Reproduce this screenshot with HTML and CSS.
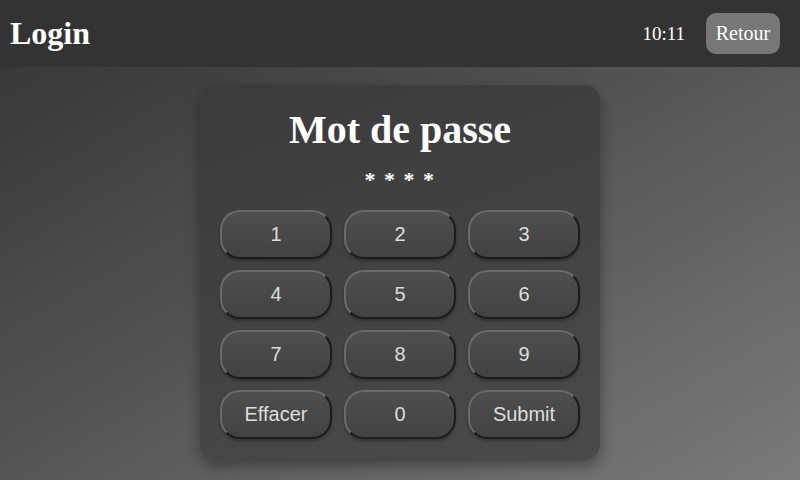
FILE: index.html
```html
<!DOCTYPE html>
<html lang="fr">
<head>
<meta charset="utf-8">
<title>Login</title>
<link rel="stylesheet" href="styles.css">
</head>
<body>
<header class="topbar">
  <h1 class="title">Login</h1>
  <div class="right">
    <span class="clock">10:11</span>
    <button class="back">Retour</button>
  </div>
</header>
<main class="stage">
  <section class="card">
    <h2 class="card-title">Mot de passe</h2>
    <div class="mask">* * * *</div>
    <div class="pad">
      <button class="key">1</button>
      <button class="key">2</button>
      <button class="key">3</button>
      <button class="key">4</button>
      <button class="key">5</button>
      <button class="key">6</button>
      <button class="key">7</button>
      <button class="key">8</button>
      <button class="key">9</button>
      <button class="key">Effacer</button>
      <button class="key">0</button>
      <button class="key">Submit</button>
    </div>
  </section>
</main>
</body>
</html>
```
FILE: styles.css
```css
* { box-sizing: border-box; }
html, body { margin: 0; height: 100%; }
body {
  font-family: "Liberation Serif", serif;
  color: #fff;
  background: linear-gradient(150deg, #333 0%, #555 50%, #7a7a7a 100%);
  display: flex;
  flex-direction: column;
  overflow: hidden;
}
.topbar {
  height: 67px;
  background: #333;
  display: flex;
  align-items: center;
  justify-content: space-between;
  padding: 0 20px 0 10px;
  flex: none;
}
.title {
  margin: 0;
  font-size: 32px;
  font-weight: bold;
}
.right {
  display: flex;
  align-items: center;
  gap: 21px;
}
.clock { font-size: 19px; }
.back {
  font-family: "Liberation Serif", serif;
  font-size: 20px;
  color: #fff;
  background: #777;
  border: none;
  border-radius: 10px;
  width: 74px;
  height: 41px;
  padding: 0;
  margin-top: -1px;
}
.stage {
  flex: 1;
  display: flex;
  justify-content: center;
  align-items: flex-start;
  padding-top: 18px;
}
.card {
  width: 400px;
  height: 375px;
  border-radius: 15px;
  background: linear-gradient(160deg, #3b3b3b, #4a4a4a);
  box-shadow: 0 6px 14px rgba(0,0,0,0.35);
  padding: 22px 20px 20px;
  display: flex;
  flex-direction: column;
  align-items: center;
}
.card-title {
  margin: 0;
  font-size: 40px;
  font-weight: bold;
  line-height: 46px;
}
.mask {
  font-size: 22px;
  font-weight: bold;
  line-height: 24px;
  margin-top: 15px;
  letter-spacing: 1.5px;
}
.pad {
  margin-top: 18px;
  width: 100%;
  display: grid;
  grid-template-columns: repeat(3, 1fr);
  column-gap: 12px;
  row-gap: 11px;
}
.key {
  height: 49px;
  border-radius: 20px;
  font-family: "Liberation Sans", Arial, sans-serif;
  font-size: 20px;
  color: #ddd;
  background: linear-gradient(180deg, #4e4e4e, #424242);
  border: 2px solid;
  border-color: #6a6a6a #1c1c1c #1c1c1c #6a6a6a;
  box-shadow: 0 2px 3px rgba(0,0,0,0.3);
  padding: 0;
}
```
